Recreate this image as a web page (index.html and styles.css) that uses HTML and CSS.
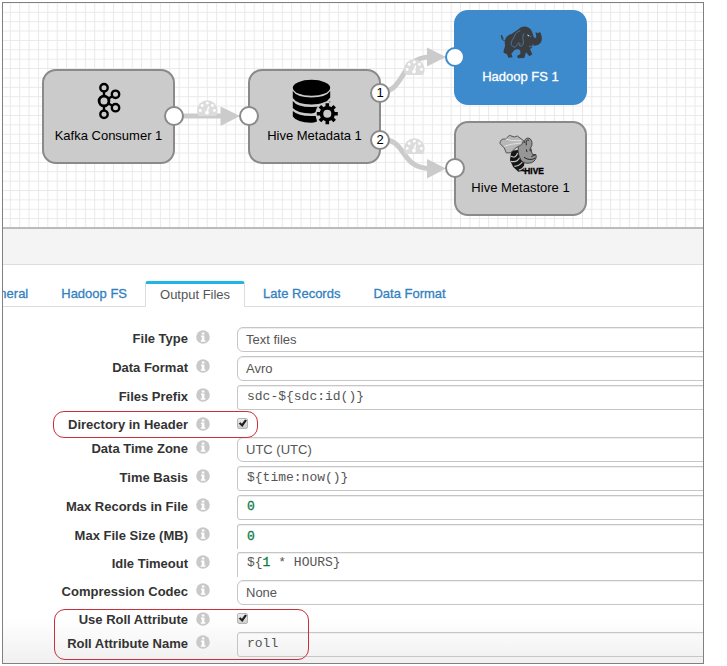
FILE: index.html
```html
<!DOCTYPE html>
<html lang="en">
<head>
<meta charset="utf-8">
<title>Pipeline: Hadoop FS 1</title>
<link rel="stylesheet" href="styles.css">
</head>
<body>
<main class="frame">
  <section class="canvas" aria-label="Pipeline canvas">
    <svg class="edges" aria-hidden="true">
      <defs>
        <pattern id="grid" x="9.8" y="11.8" width="9.38" height="9.38" patternUnits="userSpaceOnUse">
          <path d="M0 .5H9.38M.5 0V9.38" stroke="#e9e9e9" stroke-width="1"/>
        </pattern>
        <g id="gauge">
          <path d="M0 10.500A10.300 10.300 0 0 1 20.600 10.500Q20.600 14 19 16H1.600Q0 14 0 10.500Z" fill="#dcdcdc"/>
          <g fill="#fff"><circle cx="3.200" cy="10.500" r="1.400"/><circle cx="5.200" cy="5.500" r="1.400"/><circle cx="10.300" cy="3.200" r="1.400"/><circle cx="15.400" cy="5.500" r="1.400"/><circle cx="17.400" cy="10.500" r="1.400"/><circle cx="10" cy="12.600" r="1.900"/></g>
          <path d="M10 12.500L11.700 6.500" stroke="#fff" stroke-width="1.400"/>
        </g>
      </defs>
      <g transform="translate(-3 -3)">
        <rect x="3" y="3" width="100%" height="100%" fill="url(#grid)"/>
        <g fill="none" stroke="#cbcbcb" stroke-width="5">
          <path d="M174 116H222"/>
          <path d="M381 92C405 92 400 57 430 57"/>
          <path d="M381 139C407 139 400 168.500 430 168.500"/>
        </g>
        <g fill="#cbcbcb">
          <path d="M220.500 106.500L240 116L220.500 126Z"/>
          <path d="M427 47.500L446 57L427 66.500Z"/>
          <path d="M427 159L446 168.500L427 178.500Z"/>
        </g>
        <use href="#gauge" x="197" y="100"/>
        <use href="#gauge" x="404" y="59"/>
        <use href="#gauge" x="404" y="138"/>
      </g>
    </svg>

    <div class="node kafka">
      <svg class="icon" width="26" height="46" viewBox="95 79 26 46" aria-hidden="true">
        <g fill="none" stroke="#000" stroke-width="2.400">
          <path d="M103 92v4M103 106v4.500M107.500 98.500l3.500-2M107.500 103.500l3.500 2"/>
          <circle cx="103" cy="87.700" r="3.700"/><circle cx="103" cy="101" r="4.900" stroke-width="2.800"/><circle cx="103" cy="114.300" r="3.700"/>
          <circle cx="114.500" cy="94.300" r="3.700"/><circle cx="114.500" cy="107.700" r="3.700"/>
        </g>
      </svg>
      <span class="name">Kafka Consumer 1</span>
      <span class="port out"></span>
    </div>

    <div class="node metadata">
      <svg class="icon" width="48" height="46" viewBox="290 78 48 46" aria-hidden="true">
        <ellipse cx="310.500" cy="86.800" rx="18.700" ry="8"/>
        <path d="M291.800 90Q296 96.500 310.500 96.500T329.200 90V96.500Q325 103.500 310.500 103.500T291.800 97Z"/>
        <path d="M291.800 100Q296 106 310.500 106T329.200 100V104L316 110Q313 112.500 310 112.500Q296 112 291.800 107Z"/>
        <path d="M291.800 110Q297 115 310 115L315 115L316 120.500Q313 121.700 310 121.700Q296 121.500 291.800 115.500Z"/>
        <circle cx="326.300" cy="112.700" r="11.800" fill="#cbcbcb"/>
        <circle cx="326.300" cy="112.700" r="5.800" fill="none" stroke="#000" stroke-width="3.600"/>
        <g stroke="#000" stroke-width="3.600">
          <path d="M326.300 102.200v4M326.300 119.200v4M315.800 112.700h4M332.800 112.700h4M318.900 105.300l2.800 2.800M330.900 117.300l2.800 2.800M333.700 105.300l-2.800 2.800M321.700 117.300l-2.800 2.800"/>
        </g>
      </svg>
      <span class="name">Hive Metadata 1</span>
      <span class="port in"></span>
      <span class="port out first">1</span>
      <span class="port out second">2</span>
    </div>

    <div class="node hadoop selected">
      <svg class="icon" width="52" height="46" viewBox="0 0 156 138" aria-hidden="true">
        <path fill="#3a3d40" d="M50 42C34 45 27 57 30 74C31 84 24 90 26 98L36 103L40 113L53 112L49 101L58 91C64 86 72 88 76 92L76 102L66 108L69 115L88 114L93 97L103 109L112 103L105 87C111 85 113 81 112 76C122 80 137 75 140 61C142 51 138 41 135 36L128 40L122 36C121 44 127 50 121 54C114 55 115 37 106 27C98 17 81 17 72 26C64 32 56 36 50 42Z"/>
        <path d="M31 64L21 58L19 45L25 57" fill="none" stroke="#3a3d40" stroke-width="3"/>
        <path d="M76 32C60 36 59 51 51 62C46 70 49 80 58 81C68 81 65 67 74 69Q77 69 73 77Q83 82 85 69C86 61 80 51 87 41M99 50q6-7 9 1M102 78q10 6 12-5" fill="none" stroke="#4c81b0" stroke-width="2.500"/>
        <path d="M97 45l5 2" stroke="#b7c7d5" stroke-width="3"/>
      </svg>
      <span class="name">Hadoop FS 1</span>
      <span class="port in"></span>
    </div>

    <div class="node metastore">
      <svg class="icon" width="46" height="46" viewBox="352 62 138 138" aria-hidden="true">
        <path d="M392 121L412 119L431 157L429 181L413 184L397 169L388 149Z" fill="#161616"/>
        <path d="M391 138Q405 145 411 128M391 153Q411 157 418 140M401 168Q415 168 425 155M414 179Q426 178 430 168" fill="none" stroke="#c5c5c5" stroke-width="3.500"/>
        <path d="M416 99C423 88 431 94 431 98C430 79 452 78 454 97Q455 107 450 112L455 132L466 133Q470 148 453 157Q430 163 421 149C412 134 410 115 416 99Z" fill="#969696" stroke="#333" stroke-width="2.500"/>
        <path d="M437 105Q434 85 445 90M437 117l2 8M448 115l1 8M430 141q18 12 34 2M452 139l12-6" fill="none" stroke="#292929" stroke-width="3"/>
        <path d="M358 100Q358 84 375 86L386 75L401 80L410 77L429 91L423 103L406 112L390 127L377 128L371 113Z" fill="#b7b7b7" stroke="#555" stroke-width="3"/>
        <path d="M375 86L393 91L422 91M371 108L391 102L421 98" fill="none" stroke="#e2e2e2" stroke-width="3"/>
        <path d="M421 180L434 182" stroke="#111" stroke-width="4"/>
        <text class="wordmark" x="431" y="190">HIVE</text>
      </svg>
      <span class="name">Hive Metastore 1</span>
      <span class="port in"></span>
    </div>
  </section>

  <div class="toolbar"></div>

  <div class="tabs" role="tablist">
    <button class="tab" role="tab" type="button">General</button>
    <button class="tab" role="tab" type="button">Hadoop FS</button>
    <button class="tab active" role="tab" type="button" aria-selected="true">Output Files</button>
    <button class="tab" role="tab" type="button">Late Records</button>
    <button class="tab" role="tab" type="button">Data Format</button>
  </div>

  <svg class="symbols" aria-hidden="true">
    <symbol id="info" viewBox="0 0 14 14">
      <circle cx="7" cy="7" r="6.800" fill="#c9c9c9"/>
      <path d="M5.800 2.500h2.600v2H5.800zM5 5.500h3.400v4.700h1v1.500H4.800v-1.500h1V7H5z" fill="#fff"/>
    </symbol>
  </svg>

  <form class="form">
    <div class="row">
      <label for="fileType">File Type</label><svg class="info"><use href="#info"/></svg>
      <select id="fileType" class="control"><option>Text files</option></select>
    </div>
    <div class="row">
      <label for="dataFormat">Data Format</label><svg class="info"><use href="#info"/></svg>
      <select id="dataFormat" class="control"><option>Avro</option></select>
    </div>
    <div class="row">
      <label for="prefix">Files Prefix</label><svg class="info"><use href="#info"/></svg>
      <input id="prefix" class="control code" type="text" value="sdc-${sdc:id()}">
    </div>
    <div class="marked single">
      <div class="row check">
        <label for="dirHeader">Directory in Header</label><svg class="info"><use href="#info"/></svg>
        <input id="dirHeader" type="checkbox" checked>
      </div>
    </div>
    <div class="row">
      <label for="zone">Data Time Zone</label><svg class="info"><use href="#info"/></svg>
      <select id="zone" class="control"><option>UTC (UTC)</option></select>
    </div>
    <div class="row">
      <label for="basis">Time Basis</label><svg class="info"><use href="#info"/></svg>
      <input id="basis" class="control code" type="text" value="${time:now()}">
    </div>
    <div class="row">
      <label for="maxRecords">Max Records in File</label><svg class="info"><use href="#info"/></svg>
      <input id="maxRecords" class="control code number" type="text" value="0">
    </div>
    <div class="row open">
      <label for="maxSize">Max File Size (MB)</label><svg class="info"><use href="#info"/></svg>
      <input id="maxSize" class="control code number" type="text" value="0">
    </div>
    <div class="row open">
      <label id="idleLabel">Idle Timeout</label><svg class="info"><use href="#info"/></svg>
      <div class="control code" role="textbox" contenteditable="true" spellcheck="false" aria-labelledby="idleLabel">${<span class="number">1</span> * HOURS}</div>
    </div>
    <div class="row">
      <label for="codec">Compression Codec</label><svg class="info"><use href="#info"/></svg>
      <select id="codec" class="control"><option>None</option></select>
    </div>
    <div class="marked pair">
      <div class="row check">
        <label for="useRoll">Use Roll Attribute</label><svg class="info"><use href="#info"/></svg>
        <input id="useRoll" type="checkbox" checked>
      </div>
      <div class="row">
        <label for="rollName">Roll Attribute Name</label><svg class="info"><use href="#info"/></svg>
        <input id="rollName" class="control code" type="text" value="roll">
      </div>
    </div>
  </form>
</main>
</body>
</html>
```

FILE: styles.css
```css
* { box-sizing: border-box; }

body {
  margin: 0;
  padding: 2px 23px 2px 2px;
  background: #fff;
  font: 13px/16px "Liberation Sans", Arial, sans-serif;
  color: #333;
}

.frame {
  border: 1px solid #808080;
  overflow: hidden;
}

/* Pipeline canvas */
.canvas {
  position: relative;
  height: 226px;
  border-bottom: 2px solid #bbb;
  overflow: hidden;
}

.edges {
  display: block;
  width: 100%;
  height: 100%;
}

.symbols { display: none; }

.node {
  position: absolute;
  width: 133px;
  height: 95px;
  border: 2px solid #8a8a8a;
  border-radius: 14px;
  background: #cbcbcb;
  color: #000;
  text-align: center;
}

.kafka { left: 39px; top: 66px; }
.metadata { left: 245px; top: 66px; }
.hadoop { left: 451px; top: 7px; }
.metastore { left: 451px; top: 118px; }

.node .icon {
  display: block;
  height: 46px;
  margin: 8px auto 3px;
}

.node .name { display: block; }

.selected {
  background: #3d8bcd;
  border-color: #3d8bcd;
  color: #fff;
}

.selected .name { -webkit-text-stroke: 0.3px #fff; }

.wordmark {
  font: bold 25px "Liberation Sans", Arial, sans-serif;
  fill: #000;
  stroke: #000;
  stroke-width: 1px;
}

.port {
  position: absolute;
  top: 35px;
  width: 20px;
  height: 20px;
  border: 2px solid #8a8a8a;
  border-radius: 50%;
  background: #fff;
}

.port.in { left: -11px; }
.port.out { right: -11px; }
.port.first { top: 12px; }
.port.second { top: 59px; }
.selected .port { border-color: #3d8bcd; }

/* Tabs */
.toolbar {
  height: 36px;
  background: #f4f4f4;
  border-bottom: 1px solid #ddd;
}

.tabs {
  display: flex;
  gap: 3px;
  padding-top: 16px;
  margin-left: -36px;
  border-bottom: 1px solid #ddd;
}

.tab {
  flex: none;
  height: 26px;
  margin-bottom: -1px;
  padding: 2px 14px 3px;
  border: 1px solid transparent;
  border-bottom: 0;
  background: none;
  font: inherit;
  color: #337fc1;
  -webkit-text-stroke: 0.3px #337fc1;
}

.tab.active {
  padding: 1px 14px 3px;
  border-color: #ddd;
  border-top: 3px solid #1fb5e6;
  border-radius: 3px 3px 0 0;
  background: #fff;
  color: #555;
  -webkit-text-stroke: 0;
}

/* Stage configuration */
.form {
  padding: 20px 0 2px;
  background: linear-gradient(to top, #f0f0f0, #fff 44px);
}

.row {
  display: grid;
  grid-template-columns: 185px 14px 1fr;
  column-gap: 8px;
  height: 29px;
}

.row label {
  padding-top: 4px;
  text-align: right;
  font-weight: bold;
}

.info {
  width: 14px;
  height: 14px;
  margin-top: 3px;
}

.control {
  width: auto;
  height: 25px;
  margin: 0 -12px 0 19px;
  padding: 0 8px;
  border: 1px solid #c6c6c6;
  border-radius: 6px;
  box-shadow: inset 0 1px 0 #eee;
  background: transparent;
  appearance: none;
  font: inherit;
  color: #555;
}

.code {
  padding: 0 9px 2px;
  border-radius: 3px;
  font: 13px/20px "Liberation Mono", monospace;
}

.number {
  color: #0c7a48;
  -webkit-text-stroke: 0.3px #0c7a48;
}

.open { height: 28px; }

.open .control {
  border-bottom: 0;
  border-radius: 3px 0 0 0;
}

.check { height: 23px; }
.check label { padding-top: 3px; }

input[type="checkbox"] {
  appearance: none;
  width: 11px;
  height: 11px;
  margin: 4px 0 0 19px;
  border: 1px solid #b5b5b5;
  border-radius: 2px;
  background: linear-gradient(#ececec, #cfcfcf);
}

input[type="checkbox"]:checked::before {
  content: "";
  display: block;
  height: 8px;
  background: #222;
  clip-path: polygon(8% 55%, 28% 40%, 43% 60%, 78% 5%, 100% 18%, 48% 100%);
}

/* Call-out outlines */
.marked { position: relative; }

.marked::after {
  content: "";
  position: absolute;
  border: 1px solid #c9303a;
  border-radius: 11px;
  pointer-events: none;
}

.single::after {
  left: 50px;
  top: -3px;
  width: 203px;
  height: 25px;
}

.pair::after {
  left: 51px;
  top: 0;
  width: 253px;
  height: 49px;
}
```
